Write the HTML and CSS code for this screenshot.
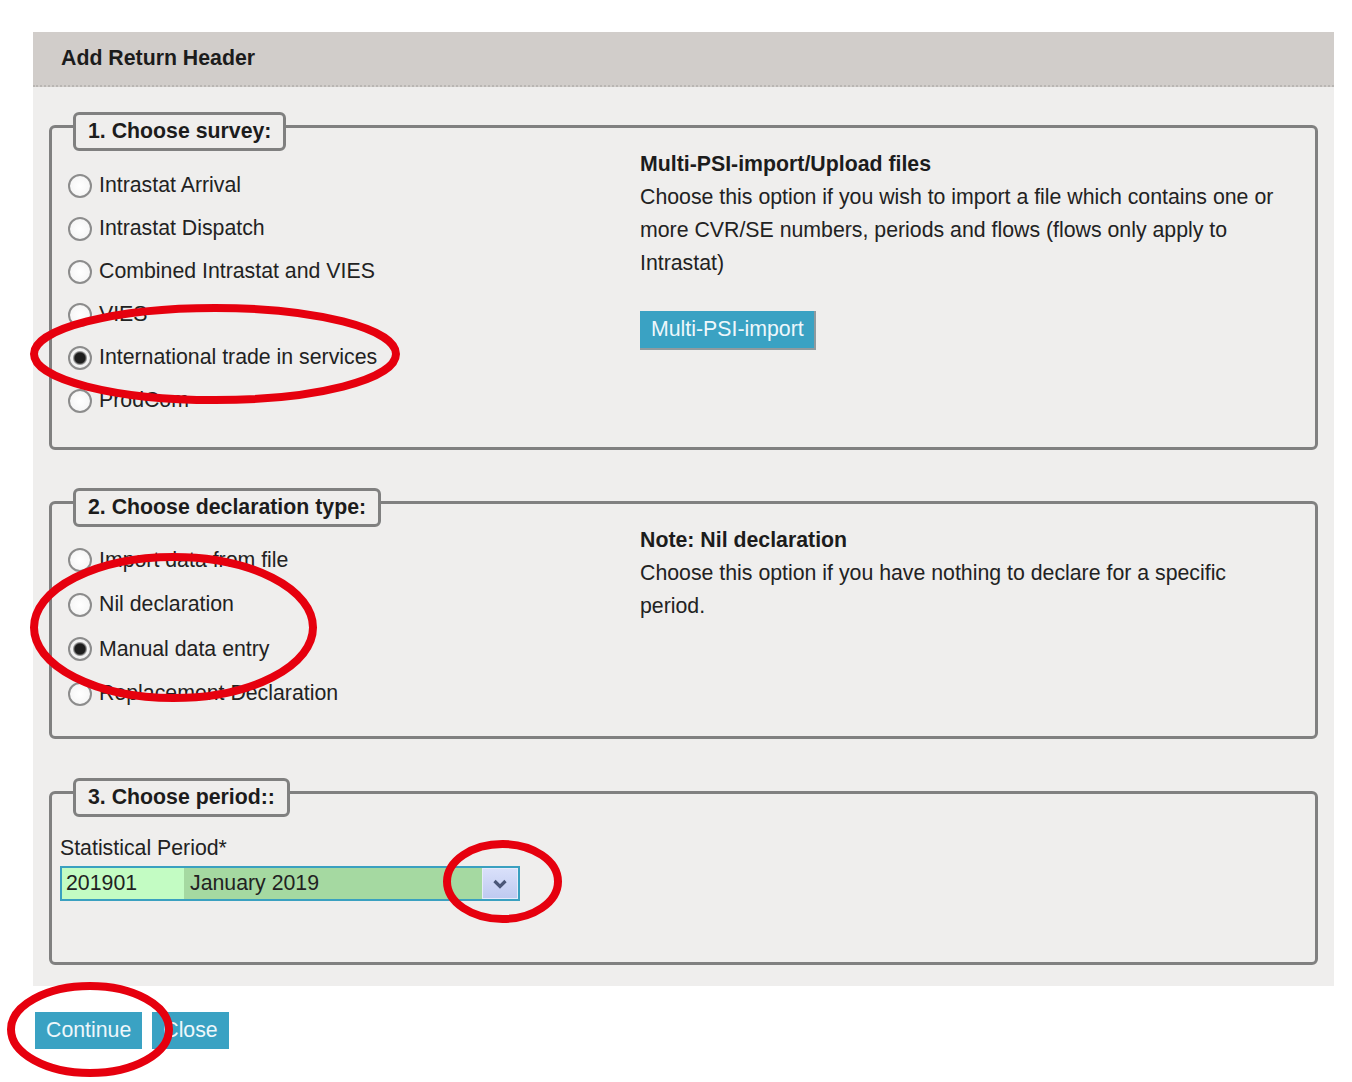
FILE: index.html
```html
<!DOCTYPE html>
<html lang="en">
<head>
<meta charset="utf-8">
<title>Add Return Header</title>
<link rel="stylesheet" href="styles.css">
</head>
<body>
<div class="page">
  <div class="panel">
    <div class="panel-header">Add Return Header</div>
    <div class="panel-body">
      <div class="section section-survey">
        <div class="legend">1. Choose survey:</div>
        <div class="options options-survey">
          <label class="option"><input type="radio" name="survey"><span>Intrastat Arrival</span></label>
          <label class="option"><input type="radio" name="survey"><span>Intrastat Dispatch</span></label>
          <label class="option"><input type="radio" name="survey"><span>Combined Intrastat and VIES</span></label>
          <label class="option"><input type="radio" name="survey"><span>VIES</span></label>
          <label class="option"><input type="radio" name="survey" checked><span>International trade in services</span></label>
          <label class="option"><input type="radio" name="survey"><span>ProdCom</span></label>
        </div>
        <div class="info">
          <div class="info-title">Multi-PSI-import/Upload files</div>
          <p class="info-text">Choose this option if you wish to import a file which contains one or more CVR/SE numbers, periods and flows (flows only apply to Intrastat)</p>
          <button class="btn btn-import" type="button">Multi-PSI-import</button>
        </div>
      </div>

      <div class="section section-type">
        <div class="legend">2. Choose declaration type:</div>
        <div class="options options-type">
          <label class="option"><input type="radio" name="dtype"><span>Import data from file</span></label>
          <label class="option"><input type="radio" name="dtype"><span>Nil declaration</span></label>
          <label class="option"><input type="radio" name="dtype" checked><span>Manual data entry</span></label>
          <label class="option"><input type="radio" name="dtype"><span>Replacement Declaration</span></label>
        </div>
        <div class="info">
          <div class="info-title">Note: Nil declaration</div>
          <p class="info-text info-text-narrow">Choose this option if you have nothing to declare for a specific period.</p>
        </div>
      </div>

      <div class="section section-period">
        <div class="legend">3. Choose period::</div>
        <div class="field-label">Statistical Period*</div>
        <div class="period-select">
          <div class="period-code">201901</div>
          <div class="period-desc">January 2019</div>
          <div class="period-btn">
            <svg width="16" height="10" viewBox="0 0 16 10"><path d="M2.5 2 L8 7.5 L13.5 2" fill="none" stroke="#4b5778" stroke-width="3.2"/></svg>
          </div>
        </div>
      </div>
    </div>
  </div>

  <div class="actions">
    <button class="btn" type="button">Continue</button>
    <button class="btn" type="button">Close</button>
  </div>

  <svg class="annotations" width="1352" height="1082" viewBox="0 0 1352 1082">
    <g fill="none" stroke="#e6000e" stroke-width="8">
      <ellipse cx="215" cy="354" rx="181" ry="46"/>
      <ellipse cx="173.5" cy="627.5" rx="139.5" ry="70.5"/>
      <ellipse cx="502.5" cy="881.5" rx="55.5" ry="37.5"/>
      <ellipse cx="90" cy="1029.5" rx="79" ry="43.5"/>
    </g>
  </svg>
</div>
</body>
</html>
```

FILE: styles.css
```css
* { box-sizing: border-box; }

html, body {
  margin: 0;
  padding: 0;
  background: #ffffff;
}

body {
  font-family: "Liberation Sans", Arial, sans-serif;
  font-size: 21.3px;
  color: #222222;
}

.page {
  position: relative;
  width: 1352px;
  height: 1082px;
  padding-top: 32px;
  padding-left: 33px;
}

.panel {
  width: 1301px;
  background: #efeeed;
}

.panel-header {
  height: 55px;
  line-height: 52px;
  padding-left: 28px;
  background: #d1cdca;
  border-bottom: 2px dotted #b9b6b3;
  font-weight: bold;
  color: #1c1c1c;
}

.panel-body {
  padding: 38px 16px 21px 16px;
}

.section {
  position: relative;
  border: 3px solid #808080;
  border-radius: 6px;
  padding: 20px 16px 0 16px;
}

.section + .section {
  margin-top: 51px;
}

.section + .section-period {
  margin-top: 52px;
}

.legend {
  position: absolute;
  top: -16px;
  left: 21px;
  height: 39px;
  line-height: 33px;
  padding: 0 12px;
  background: #efeeed;
  border: 3px solid #808080;
  border-radius: 6px;
  font-weight: bold;
  color: #1c1c1c;
}

.section-survey,
.section-type {
  display: grid;
  grid-template-columns: 572px 1fr;
}

.section-survey { padding-bottom: 25px; }
.section-type { padding-bottom: 20px; }

.options {
  display: flex;
  flex-direction: column;
  margin-top: 14px;
}

.options-survey { margin-top: 16px; }

.options-survey .option { height: 43px; }
.options-type .option { height: 44.5px; }

.option {
  display: flex;
  align-items: center;
  gap: 7px;
  color: #222222;
}

.option input {
  -webkit-appearance: none;
  appearance: none;
  margin: 0;
  width: 24px;
  height: 24px;
  border-radius: 50%;
  border: 2px solid #8c8c8c;
  background: radial-gradient(circle, #ffffff 0%, #f6f6f6 70%, #e2e2e2 100%);
  flex: none;
}

.option input:checked {
  background: radial-gradient(circle, #1e1e1e 0, #1e1e1e 5px, #6d6d6d 6px, #f4f4f4 7.5px, #e4e4e4 100%);
}

.info {
  margin-top: 0;
}

.info-title {
  font-weight: bold;
  line-height: 33px;
  color: #1c1c1c;
}

.info-text {
  margin: 0;
  width: 650px;
  line-height: 33px;
}

.info-text-narrow {
  width: 615px;
}

.btn {
  font-family: "Liberation Sans", Arial, sans-serif;
  font-size: 21.3px;
  color: #eef7fb;
  background: #3aa2c3;
  border: none;
  height: 37px;
  padding: 0 11px;
  margin: 0;
  cursor: pointer;
}

.btn-import {
  display: block;
  margin-top: 31px;
  height: 39px;
  border-right: 2px solid #8f9a9e;
  border-bottom: 2px solid #8f9a9e;
  padding: 0 10px 0 11px;
}

.section-period {
  padding: 38px 8px 61px 8px;
}

.field-label {
  line-height: 33px;
  color: #222222;
  margin-bottom: 1px;
}

.period-select {
  display: flex;
  width: 460px;
  height: 35px;
  border: 2px solid #3aa0c0;
  line-height: 31px;
}

.period-code {
  width: 122px;
  padding-left: 4px;
  background: #c3fcc3;
}

.period-desc {
  flex: 1;
  padding-left: 6px;
  background: #a5d9a1;
}

.period-btn {
  width: 36px;
  display: flex;
  align-items: center;
  justify-content: center;
  background: linear-gradient(#d9e0fa, #bfcaf0);
  border: 1px solid #e6ebfb;
}

.actions {
  display: flex;
  gap: 10px;
  margin-top: 26px;
  margin-left: 2px;
}

.annotations {
  position: absolute;
  top: 0;
  left: 0;
  pointer-events: none;
}
```
